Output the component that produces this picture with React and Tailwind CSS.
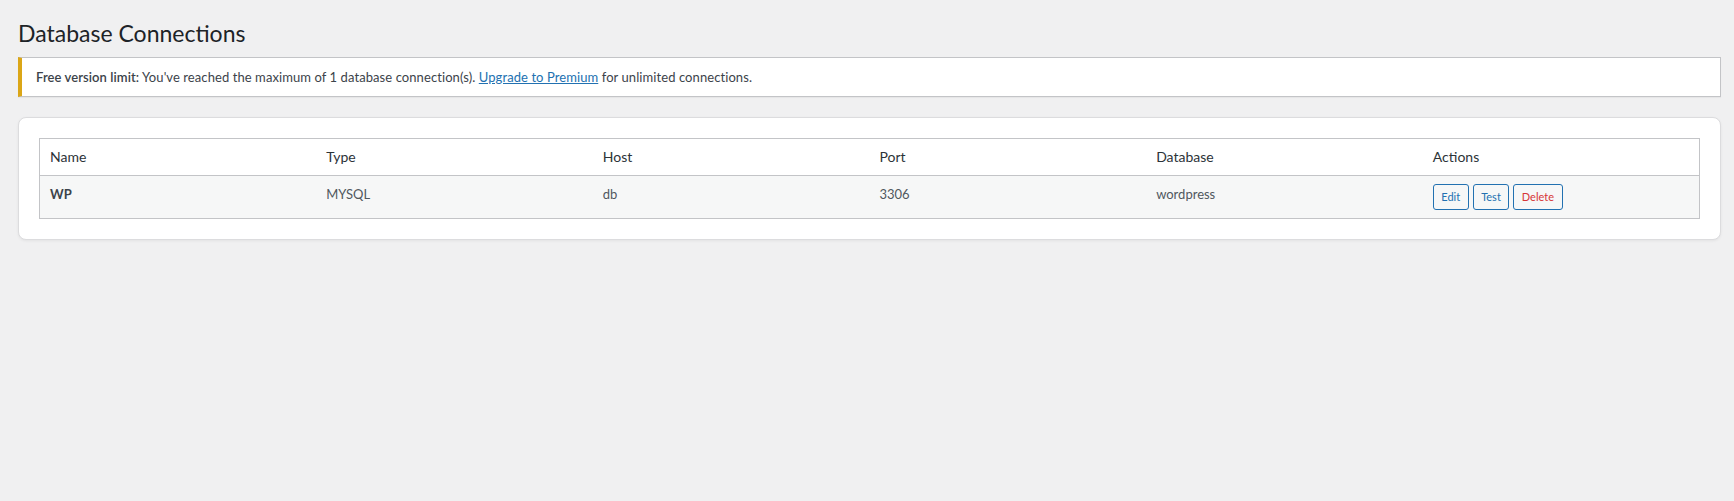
import React from "react";

const rows = [
  { name: "WP", type: "MYSQL", host: "db", port: "3306", database: "wordpress" },
];

function SmallButton({ children, danger }) {
  return (
    <button
      type="button"
      className={
        "h-[26px] px-[7.5px] rounded-[3px] border border-[#2271b1] bg-[#f6f7f7] text-[11px] leading-[24px] " +
        (danger ? "text-[#d63638]" : "text-[#2271b1]")
      }
    >
      {children}
    </button>
  );
}

export default function App() {
  return (
    <div
      className="min-h-[501px] w-full bg-[#f0f0f1] text-[13px] text-[#3c434a]"
      style={{ fontFamily: 'Lato, "Open Sans", "Noto Sans", sans-serif' }}
    >
      <div className="ml-[18px] mr-[13px] pt-[18px]">
        <h1 className="m-0 pb-[4px] text-[23px] leading-[30px] font-normal text-[#1d2327]">
          Database Connections
        </h1>

        <div className="mt-[5px] border border-[#c3c4c7] border-l-4 border-l-[#dba617] bg-white px-[14px] py-[9px] shadow-[0_1px_1px_rgba(0,0,0,0.04)]">
          <p className="m-0 leading-[20px] tracking-[0.08px]">
            <strong className="font-semibold">Free version limit:</strong> You've reached the maximum of 1
            database connection(s).{" "}
            <a href="#" className="text-[#2271b1] underline">
              Upgrade to Premium
            </a>{" "}
            for unlimited connections.
          </p>
        </div>

        <div className="mt-[20px] rounded-[8px] border border-[#dcdcde] bg-white p-[20px] shadow-[0_1px_3px_rgba(0,0,0,0.06)]">
          <table className="w-full table-fixed border-collapse border border-[#c3c4c7]">
            <thead>
              <tr className="bg-white border-b border-[#c3c4c7]">
                {["Name", "Type", "Host", "Port", "Database", "Actions"].map((h) => (
                  <th
                    key={h}
                    className="px-[10px] py-[8px] text-left align-top text-[14px] leading-[20px] font-normal text-[#2c3338]"
                  >
                    {h}
                  </th>
                ))}
              </tr>
            </thead>
            <tbody>
              {rows.map((r) => (
                <tr key={r.name} className="bg-[#f6f7f7]">
                  <td className="px-[10px] py-[8px] align-top leading-[20px] text-[#50575e]">
                    <strong className="font-bold text-[#3c434a]">{r.name}</strong>
                  </td>
                  <td className="px-[10px] py-[8px] align-top leading-[20px] text-[#50575e]">{r.type}</td>
                  <td className="px-[10px] py-[8px] align-top leading-[20px] text-[#50575e]">{r.host}</td>
                  <td className="px-[10px] py-[8px] align-top leading-[20px] text-[#50575e]">{r.port}</td>
                  <td className="px-[10px] py-[8px] align-top leading-[20px] text-[#50575e]">{r.database}</td>
                  <td className="px-[10px] py-[8px] align-top leading-[20px]">
                    <div className="flex gap-[4px]">
                      <SmallButton>Edit</SmallButton>
                      <SmallButton>Test</SmallButton>
                      <SmallButton danger>Delete</SmallButton>
                    </div>
                  </td>
                </tr>
              ))}
            </tbody>
          </table>
        </div>
      </div>
    </div>
  );
}
